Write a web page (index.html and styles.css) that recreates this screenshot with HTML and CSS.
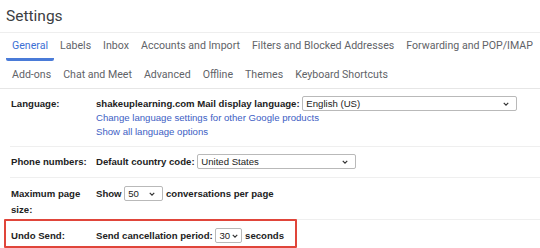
FILE: index.html
```html
<!DOCTYPE html>
<html lang="en">
<head>
  <meta charset="UTF-8" />
  <title>Settings</title>
  <link rel="stylesheet" href="styles.css">
</head>
<body>

<div class="title">Settings</div>

<nav class="tabs">
  <div class="tab-row first">
    <a class="tab active">General</a>
    <a class="tab">Labels</a>
    <a class="tab">Inbox</a>
    <a class="tab">Accounts and Import</a>
    <a class="tab">Filters and Blocked Addresses</a>
    <a class="tab">Forwarding and POP/IMAP</a>
  </div>
  <div class="tab-row second">
    <a class="tab">Add-ons</a>
    <a class="tab">Chat and Meet</a>
    <a class="tab">Advanced</a>
    <a class="tab">Offline</a>
    <a class="tab">Themes</a>
    <a class="tab">Keyboard Shortcuts</a>
  </div>
</nav>

<section class="settings">
  <div class="row lang">
    <div class="label">Language:</div>
    <div class="value">
      <div class="line"><b>shakeuplearning.com Mail display language:</b> <span class="select" style="width:215px">English (US)<svg class="chev" viewBox="0 0 8 5"><polyline points="1,1 4,4 7,1"/></svg></span></div>
      <div class="line"><a>Change language settings for other Google products</a></div>
      <div class="line"><a>Show all language options</a></div>
    </div>
  </div>

  <div class="row phone">
    <div class="label">Phone numbers:</div>
    <div class="value">
      <div class="line"><b>Default country code:</b> <span class="select" style="width:159px">United States<svg class="chev" viewBox="0 0 8 5"><polyline points="1,1 4,4 7,1"/></svg></span></div>
    </div>
  </div>

  <div class="row pagesize">
    <div class="label">Maximum page size:</div>
    <div class="value">
      <div class="line"><b>Show</b> <span class="select" style="width:39px">50<svg class="chev" viewBox="0 0 8 5"><polyline points="1,1 4,4 7,1"/></svg></span> <b>conversations per page</b></div>
    </div>
  </div>

  <div class="row undo">
    <div class="label">Undo Send:</div>
    <div class="value">
      <div class="line"><b>Send cancellation period:</b> <span class="select small" style="width:27px">30<svg class="chev" viewBox="0 0 8 5"><polyline points="1,1 4,4 7,1"/></svg></span> <b>seconds</b></div>
    </div>
  </div>

  <div class="highlight"></div>
</section>

</body>
</html>
```

FILE: styles.css
```css
* {
  margin: 0; padding: 0; box-sizing: border-box;
}
body {
  background: #fff;
  color: #222;
  font-family: 'Liberation Sans', Arial, sans-serif;
  width: 540px;
  height: 248px;
  overflow: hidden;
}
.title {
  font-family: Roboto, sans-serif;
  font-size: 15.5px;
  line-height: 18px;
  color: #3c4043;
  padding: 7px 0 0 6px;
  height: 33px;
  border-bottom: 1px solid #eeeeee;
}
.tabs {
  border-bottom: 1px solid #e6e6e6;
  padding-left: 6px;
}
.tab-row {
  display: flex;
}
.tab {
  font-family: Roboto, sans-serif;
  font-size: 10.6px;
  line-height: 14px;
  color: #5f6368;
  padding: 6px 6px 5px;
  border-bottom: 3px solid transparent;
}
.tab-row.second .tab {
  padding: 7px 6px 3px;
}
.tab.active {
  color: #3b6fd4;
  border-bottom-color: #4a7bd8;
  border-radius: 0 0 2px 2px;
}
.settings {
  position: relative;
}
.row {
  display: flex;
  margin-left: 10px;
  padding: 8px 0 7px;
  border-bottom: 1px solid #efefef;
  font-size: 9.6px;
}
.row.phone {
  padding: 8px 0 8px;
}
.row.pagesize {
  padding: 8px 0 1px;
}
.row.undo {
  padding: 9px 0 8px;
  border-bottom: none;
}
.label {
  width: 86px;
  padding-left: 1px;
  font-weight: bold;
  line-height: 14px;
}
.pagesize .label {
  line-height: 16px;
  width: 86px;
}
.value .line {
  line-height: 14px;
  height: 14px;
  white-space: nowrap;
}
.pagesize .value .line {
  margin-top: 1px;
}
.value a {
  color: #3d60c4;
}
.select {
  display: inline-block;
  position: relative;
  height: 15px;
  line-height: 13px;
  vertical-align: middle;
  margin-top: -2px;
  padding-left: 3px;
  border: 1px solid #b9b9b9;
  border-radius: 2px;
  background: #fff;
  color: #222;
  font-weight: normal;
}
.chev {
  position: absolute;
  right: 7px;
  top: 5px;
  width: 6px;
  height: 4px;
  fill: none;
  stroke: #333;
  stroke-width: 1.6;
}
.select.small .chev {
  right: 3px;
}
.highlight {
  position: absolute;
  left: 4px;
  top: 130px;
  width: 293px;
  height: 29px;
  border: 2.5px solid #e0453a;
  border-radius: 1px;
}
```
